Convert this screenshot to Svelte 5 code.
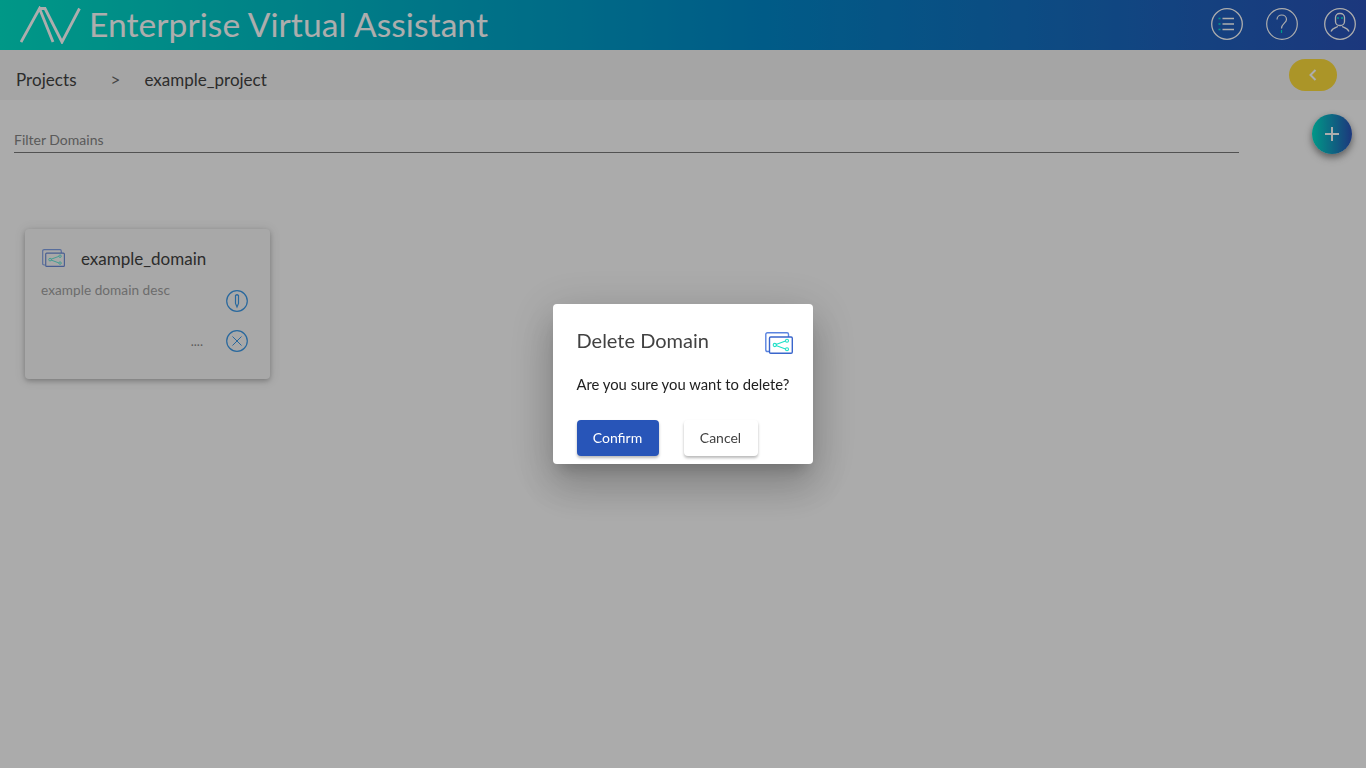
<script>
let filter = $state('');
</script>

{#snippet domainIcon(w, h)}
  <svg width={w} height={h} viewBox="0 0 28 22" fill="none">
    <path d="M4 19.500 H2.500 Q0.800 19.500 0.800 18 V2.300 Q0.800 0.800 2.500 0.800 H22 Q23.500 0.800 23.500 2.300 V5" stroke="#5a84e0" stroke-width="1.400" />
    <rect x="4.500" y="5" width="22.800" height="16.300" rx="1.200" stroke="#3a66cc" stroke-width="1.400" />
    <path d="M11 12.500 L20.500 9 M11 13.500 L20.500 17" stroke="#1fe0c8" stroke-width="1.100" />
    <circle cx="9.800" cy="13" r="1.600" stroke="#1fe0c8" stroke-width="1.100" />
    <circle cx="22" cy="8.800" r="1.500" stroke="#1fe0c8" stroke-width="1.100" />
    <circle cx="22" cy="17.200" r="1.500" stroke="#1fe0c8" stroke-width="1.100" />
  </svg>
{/snippet}

<div class="page">
  <header class="topbar">
    <div class="brand">
      <svg class="logo" width="62" height="38" viewBox="0 0 62 38" fill="none" stroke="#fff" stroke-width="2.800" stroke-linejoin="miter">
        <path d="M1 36 L19.500 2.500 L33 36" />
        <path d="M19.500 2.500 H25 L42 36 L59.500 2.500" />
      </svg>
      <span class="title">Enterprise Virtual Assistant</span>
    </div>
    <nav class="actions">
      <button class="round" aria-label="Menu">
        <svg width="32" height="32" viewBox="0 0 32 32" fill="none" stroke="#fff" stroke-width="1.300">
          <circle cx="16" cy="16" r="15.300" />
          <path d="M11.500 10.500 H23 M11.500 16 H23 M11.500 21.500 H23" />
          <path d="M7.500 10.500 H9.500 M7.500 16 H9.500 M7.500 21.500 H9.500" stroke="#00e5d0" />
        </svg>
      </button>
      <button class="round" aria-label="Help">
        <svg width="32" height="32" viewBox="0 0 32 32" fill="none" stroke="#fff" stroke-width="1.200">
          <circle cx="16" cy="16" r="15.300" />
          <path d="M11 11.500 C11 5.500 20.500 5.500 20.500 11.500 C20.500 15 15.500 15.500 15.500 20.500" />
          <path d="M15.500 22 V25" stroke="#00e5d0" />
        </svg>
      </button>
      <button class="round" aria-label="Account">
        <svg width="32" height="32" viewBox="0 0 32 32" fill="none" stroke="#fff" stroke-width="1.300">
          <circle cx="16" cy="16" r="15.300" />
          <rect x="11.500" y="5.500" width="9" height="12" rx="4" />
          <path d="M7 23.500 C8.500 20 12 19.500 14 18.500 M25 23.500 C23.500 20 20 19.500 18 18.500" />
          <path d="M13 10 H15 M17 10 H19" stroke="#00e5d0" />
        </svg>
      </button>
    </nav>
  </header>

  <div class="crumbs">
    <div class="trail">
      <span>Projects</span>
      <span class="sep">&gt;</span>
      <span>example_project</span>
    </div>
    <button class="collapse" aria-label="Collapse">
      <svg width="10" height="12" viewBox="0 0 10 12" fill="none" stroke="#fff" stroke-width="2"><path d="M7.500 1 L2.500 6 L7.500 11" /></svg>
    </button>
  </div>

  <div class="toolbar">
    <label class="filter">
      <input bind:value={filter} placeholder="Filter Domains" />
    </label>
    <button class="fab" aria-label="Add domain">
      <svg width="16" height="16" viewBox="0 0 16 16" stroke="#fff" stroke-width="2"><path d="M8 1 V15 M1 8 H15" /></svg>
    </button>
  </div>

  <section class="cards">
    <article class="card">
      <div class="card-head">
        {@render domainIcon(23, 18)}
        <h3>example_domain</h3>
      </div>
      <div class="card-body">
        <p>example domain desc</p>
        <div class="card-side">
          <span class="dots">....</span>
          <div class="card-icons">
            <svg width="22" height="22" viewBox="0 0 22 22" fill="none" stroke="#3d9ae8" stroke-width="1.200">
              <circle cx="11" cy="11" r="10.300" />
              <path d="M9.500 5.500 Q11 4 12.500 5.500 V13.500 L11 17 L9.500 13.500 Z" />
            </svg>
            <svg width="22" height="22" viewBox="0 0 22 22" fill="none" stroke="#3d9ae8" stroke-width="1.200">
              <circle cx="11" cy="11" r="10.300" />
              <path d="M6.500 6.500 L15.500 15.500 M15.500 6.500 L6.500 15.500" stroke-width="1" />
            </svg>
          </div>
        </div>
      </div>
    </article>
  </section>
</div>

<div class="backdrop">
  <div class="dialog" role="dialog">
    <div class="dialog-head">
      <h2>Delete Domain</h2>
      {@render domainIcon(28, 22)}
    </div>
    <p>Are you sure you want to delete?</p>
    <div class="dialog-actions">
      <button class="confirm">Confirm</button>
      <button class="cancel">Cancel</button>
    </div>
  </div>
</div>

<style>
:global(body) {
  margin: 0;
  background: #fcfcfc;
  font-family: Lato, "Open Sans", sans-serif;
  overflow: hidden;
}
button {
  font-family: inherit;
  border: none;
  cursor: pointer;
  padding: 0;
}
.page {
  height: 768px;
  background: #fcfcfc;
}
.topbar {
  height: 50px;
  display: flex;
  align-items: center;
  justify-content: space-between;
  background: linear-gradient(90deg, #00e0c8, #0088c8 55%, #2a52b8);
  padding: 0 10px 0 20px;
}
.brand {
  display: flex;
  align-items: center;
  gap: 7px;
}
.logo {
  display: block;
}
.title {
  font-size: 33.6px;
  color: #fff;
  letter-spacing: 0.05px;
  line-height: 48px;
  padding-bottom: 2px;
}
.actions {
  display: flex;
  gap: 23px;
  padding-bottom: 2px;
}
.round {
  width: 32px;
  height: 32px;
  background: none;
}
.round:last-child {
  margin-left: 3px;
}
.round svg {
  display: block;
}
.crumbs {
  height: 50px;
  display: flex;
  align-items: center;
  justify-content: space-between;
  padding: 0 29px 0 16px;
  background: #f3f3f3;
  color: #424242;
  font-size: 17px;
}
.trail {
  padding-top: 8px;
  display: flex;
  align-items: center;
}
.trail span:first-child {
  letter-spacing: 0.05px;
}
.sep {
  margin: 0 24px 0 34px;
  font-size: 17px;
  color: #666;
}
.collapse {
  width: 48px;
  height: 32px;
  border-radius: 16px;
  background: #fddc3b;
  display: flex;
  align-items: center;
  justify-content: center;
}
.toolbar {
  display: flex;
  align-items: flex-start;
  justify-content: space-between;
  padding: 14px 14px 0;
}
.filter {
  width: 1225px;
  margin-top: 16px;
  display: block;
  border-bottom: 1px solid #7a7a7a;
}
.filter input {
  width: 100%;
  box-sizing: border-box;
  border: none;
  background: none;
  outline: none;
  padding: 0 0 4px;
  height: 22px;
  font: 14px Lato, sans-serif;
  color: #333;
  display: block;
}
.filter input::placeholder {
  color: #858585;
  opacity: 1;
}
.fab {
  width: 40px;
  height: 40px;
  border-radius: 50%;
  background: linear-gradient(90deg, #00e0c8, #2a52b8);
  display: flex;
  align-items: center;
  justify-content: center;
  box-shadow: 0 3px 6px rgba(0, 0, 0, 0.3), 0 4px 10px rgba(0, 0, 0, 0.2);
}
.cards {
  padding: 75px 25px 0;
}
.card {
  width: 245px;
  height: 150px;
  box-sizing: border-box;
  background: #f8f8f8;
  border-radius: 4px;
  padding: 15px 16px;
  box-shadow: 0 2px 5px rgba(0, 0, 0, 0.22), 0 1px 12px rgba(0, 0, 0, 0.12);
}
.card-head {
  display: flex;
  align-items: center;
  gap: 16px;
  height: 28px;
  margin-left: 1px;
}
.card-head svg {
  opacity: 0.75;
}
.card-head h3 {
  margin: 0;
  font-size: 17px;
  font-weight: 400;
  color: #424242;
}
.card-body {
  display: flex;
  justify-content: space-between;
}
.card-body p {
  margin: 10px 0 0;
  font-size: 13.6px;
  line-height: 17px;
  color: #a0a0a0;
  letter-spacing: 0.05px;
}
.card-side {
  display: flex;
  align-items: flex-end;
  gap: 23px;
  margin-right: 6px;
}
.dots {
  font-size: 13px;
  color: #8a8a8a;
  line-height: 16px;
  margin-bottom: 3px;
}
.card-icons {
  display: flex;
  flex-direction: column;
  gap: 18px;
  margin-top: 18px;
}
.card-icons svg {
  display: block;
}
.backdrop {
  position: fixed;
  inset: 0;
  background: rgba(0, 0, 0, 0.32);
  display: flex;
  align-items: center;
  justify-content: center;
}
.dialog {
  width: 260px;
  height: 160px;
  box-sizing: border-box;
  background: #fff;
  border-radius: 4px;
  padding: 23px 19px 0 23.5px;
  box-shadow: 0 11px 15px -7px rgba(0, 0, 0, 0.2), 0 24px 38px 3px rgba(0, 0, 0, 0.14), 0 9px 46px 8px rgba(0, 0, 0, 0.12);
}
.dialog-head {
  display: flex;
  justify-content: space-between;
  align-items: center;
  height: 26px;
}
.dialog-head svg {
  margin-top: 5px;
  margin-right: 1px;
}
.dialog-head h2 {
  margin: 0;
  font-size: 20px;
  font-weight: 400;
  color: #424242;
}
.dialog p {
  margin: 21px 0 0;
  font-size: 14.8px;
  line-height: 20px;
  color: #212121;
  white-space: nowrap;
}
.dialog-actions {
  display: flex;
  gap: 25px;
  margin-top: 26px;
}
.dialog-actions button {
  height: 36px;
  padding-bottom: 2px;
  border-radius: 4px;
  font-size: 14px;
  box-shadow: 0 2px 3px rgba(0, 0, 0, 0.28);
}
.confirm {
  width: 82px;
  background: #2855b8;
  color: #fff;
}
.cancel {
  width: 74px;
  background: #fff;
  color: #424242;
}
</style>
